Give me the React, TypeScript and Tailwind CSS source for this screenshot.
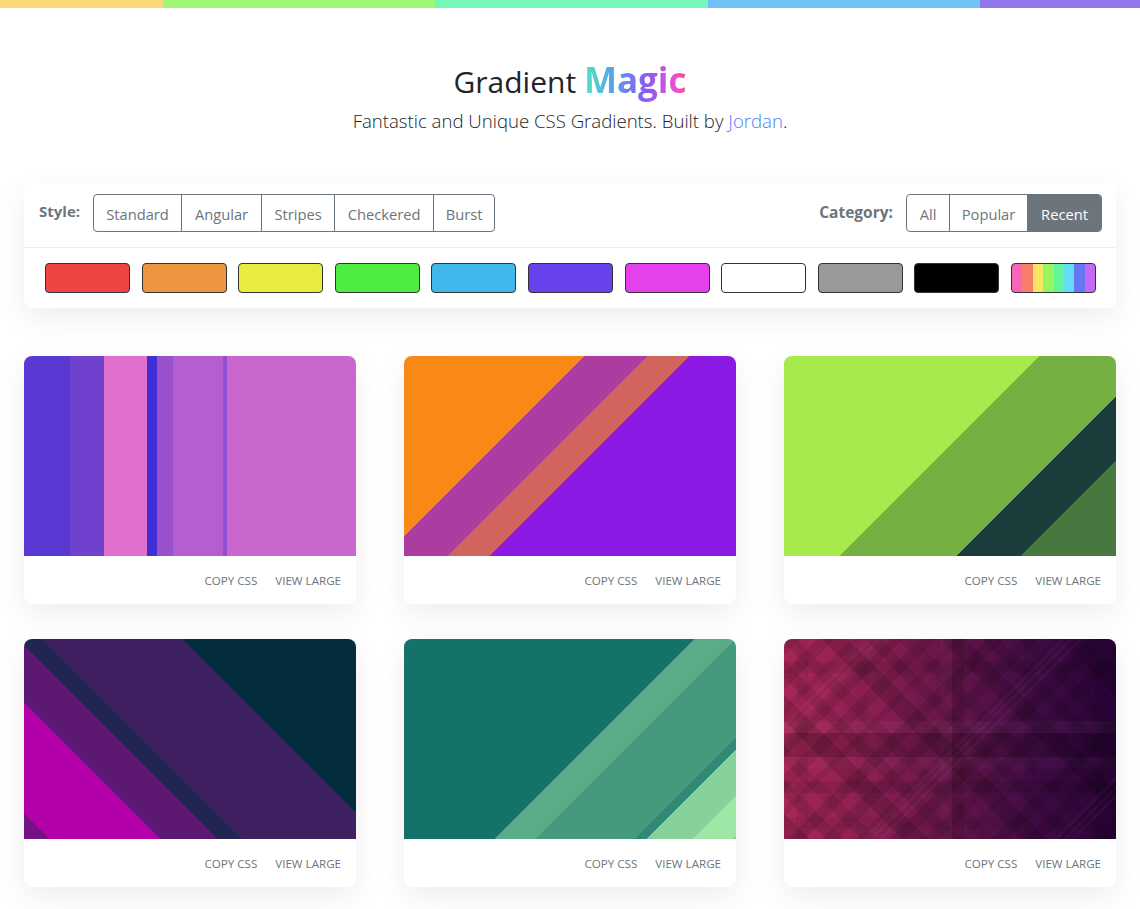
import { type ReactNode } from 'react'

// ── Data ────────────────────────────────────────────────────────────────────

const styles = [
  { label: 'Standard', width: 'w-[87px]' },
  { label: 'Angular', width: 'w-[80px]' },
  { label: 'Stripes', width: 'w-[73px]' },
  { label: 'Checkered', width: 'w-[99px]' },
  { label: 'Burst', width: 'w-[61px]' },
]

const categories = [
  { label: 'All', width: 'w-[42px]', active: false },
  { label: 'Popular', width: 'w-[78px]', active: false },
  { label: 'Recent', width: 'w-[74px]', active: true },
]

const swatches = [
  'bg-[#ef4444]',
  'bg-[#ec9740]',
  'bg-[#e8ec40]',
  'bg-[#4eec40]',
  'bg-[#40b8ec]',
  'bg-[#6840ec]',
  'bg-[#e440ec]',
  'bg-white',
  'bg-[#999999]',
  'bg-black',
  'bg-[linear-gradient(90deg,#f865b8_0_12.5%,#f87e68_12.5%_25%,#f5e763_25%_37.5%,#97f65f_37.5%_50%,#62f59c_50%_62.5%,#65dcf5_62.5%_75%,#6577f5_75%_87.5%,#c56af5_87.5%_100%)]',
]

const gradients = [
  'bg-[linear-gradient(90deg,#5a38d3_0_46px,#7040cf_46px_80px,#e070cc_80px_123px,#3f2fd6_123px_133px,#9a52cc_133px_149px,#b35fcf_149px_199px,#8f50d5_199px_203px,#c967cc_203px)]',
  'bg-[linear-gradient(135deg,#f98816_0_127.3px,#ab3ca0_127.3px_172.5px,#d1645c_172.5px_201.8px,#8b19e3_201.8px)]',
  'bg-[linear-gradient(135deg,#a5ea4a_0_181px,#75b042_181px_263.7px,#1a3d3c_263.7px_309px,#48783f_309px)]',
  'bg-[linear-gradient(45deg,#761183_0_17.7px,#b300aa_17.7px_96.2px,#5c1872_96.2px_137px,#20264f_137px_154px,#3f2060_154px_253.3px,#042c3d_253.3px)]',
  'bg-[linear-gradient(135deg,#157268_0_205.7px,#5aab87_205.7px_234.5px,#459a7d_234.5px_304.7px,#2e8a74_304.7px_313px,#87d09a_313px_345.5px,#9ee6a6_345.5px_374px,#87d09a_374px)]',
  // plaid: two diagonal layers, a thin "/" cluster, then the flat horizontal and vertical bands
  'bg-[repeating-linear-gradient(135deg,rgba(0,0,0,0.12)_0_12px,transparent_12px_24px,rgba(0,0,0,0.1)_24px_36px,transparent_36px_48px,rgba(0,0,0,0.08)_48px_54px,transparent_54px_72px),repeating-linear-gradient(45deg,rgba(0,0,0,0.14)_0_18px,transparent_18px_30px,rgba(0,0,0,0.1)_30px_42px,transparent_42px_54px,rgba(0,0,0,0.08)_54px_66px,transparent_66px_84px),repeating-linear-gradient(135deg,transparent_0_60px,rgba(255,255,255,0.03)_60px_63px,transparent_63px_66px,rgba(255,255,255,0.03)_66px_69px,transparent_69px_72px,rgba(255,255,255,0.03)_72px_75px,transparent_75px_136px),linear-gradient(180deg,transparent_0_22px,rgba(0,0,0,0.08)_22px_34px,transparent_34px_82px,rgba(255,255,255,0.03)_82px_94px,rgba(0,0,0,0.14)_94px_118px,rgba(255,255,255,0.02)_118px_130px,transparent_130px_142px,rgba(0,0,0,0.1)_142px_154px,transparent_154px_178px,rgba(0,0,0,0.06)_178px_190px,transparent_190px),linear-gradient(90deg,transparent_0_12px,rgba(0,0,0,0.06)_12px_24px,transparent_24px_72px,rgba(0,0,0,0.04)_72px_84px,transparent_84px_156px,rgba(255,255,255,0.02)_156px_168px,rgba(0,0,0,0.12)_168px_180px,transparent_180px_240px,rgba(0,0,0,0.06)_240px_252px,transparent_252px_310px,rgba(0,0,0,0.08)_310px_322px,transparent_322px),linear-gradient(90deg,#a82658,#8c1f52_25%,#661549_50%,#420b46_75%,#280236)]',
]

// ── Components ──────────────────────────────────────────────────────────────

function GroupButton({
  width,
  active = false,
  children,
}: {
  width: string
  active?: boolean
  children: ReactNode
}) {
  return (
    <button
      className={`${width} h-9 border-l border-[#6c757d] pt-[3px] text-[14.7px] first:border-l-0 ${
        active ? 'bg-[#6c757d] text-white' : 'text-[#6c757d]'
      }`}
    >
      {children}
    </button>
  )
}

function GradientCard({ gradient }: { gradient: string }) {
  return (
    <div className="overflow-hidden rounded-lg bg-white shadow-[0_10px_30px_rgba(0,0,0,0.07)]">
      <div className={`h-[200px] ${gradient}`} />
      <div className="flex h-12 items-center justify-end gap-[18px] pt-px pr-[15px] text-[11.6px] text-[#6c757d]">
        <span>COPY CSS</span>
        <span>VIEW LARGE</span>
      </div>
    </div>
  )
}

export default function App() {
  return (
    <div className="min-h-[909px] bg-white font-['Open_Sans',sans-serif]">
      <div className="flex h-2">
        <div className="w-[163px] bg-[#f9d976]" />
        <div className="w-[272px] bg-[#a0f776]" />
        <div className="w-[273px] bg-[#74f7b8]" />
        <div className="w-[272px] bg-[#70c1f5]" />
        <div className="flex-1 bg-[#9176f0]" />
      </div>

      <header className="pt-12 text-center">
        <h1 className="h-[48px] text-[30px] leading-[48px] text-[#212529]">
          Gradient{' '}
          <span className="bg-[linear-gradient(90deg,#4de8c0,#5a9bec_30%,#8a5cf0_60%,#ee4fd0_90%,#f2507a)] bg-clip-text text-[35px] font-bold text-transparent">
            Magic
          </span>
        </h1>
        <p className="pt-[3px] text-[18.6px] leading-[27px] font-light text-[#212529]">
          Fantastic and Unique CSS Gradients. Built by <span className="text-[#4d7cfe]">Jordan</span>.
        </p>
      </header>

      <main className="px-6 pt-[49px]">
        <section className="rounded-lg bg-white shadow-[0_10px_30px_rgba(0,0,0,0.07)]">
          <div className="flex h-[65px] items-center justify-between border-b border-[#eeeeee] pr-[14px] pb-1 pl-[15px]">
            <div className="flex items-center">
              <span className="mr-[13px] mb-1 text-[15px] font-bold text-[#6c757d]">Style:</span>
              <div className="flex rounded border border-[#6c757d]">
                {styles.map((s) => (
                  <GroupButton key={s.label} width={s.width}>
                    {s.label}
                  </GroupButton>
                ))}
              </div>
            </div>
            <div className="flex items-center">
              <span className="mr-[13px] text-[15.5px] font-bold text-[#6c757d]">Category:</span>
              <div className="flex overflow-hidden rounded border border-[#6c757d]">
                {categories.map((c) => (
                  <GroupButton key={c.label} width={c.width} active={c.active}>
                    {c.label}
                  </GroupButton>
                ))}
              </div>
            </div>
          </div>
          <div className="flex h-[60px] items-center justify-between pr-5 pl-[21px]">
            {swatches.map((color) => (
              <div key={color} className={`h-[30px] w-[85px] rounded border border-[#333333] ${color}`} />
            ))}
          </div>
        </section>

        <div className="mt-12 grid grid-cols-3 gap-x-12 gap-y-[35px]">
          {gradients.map((g) => (
            <GradientCard key={g} gradient={g} />
          ))}
        </div>
      </main>
    </div>
  )
}
